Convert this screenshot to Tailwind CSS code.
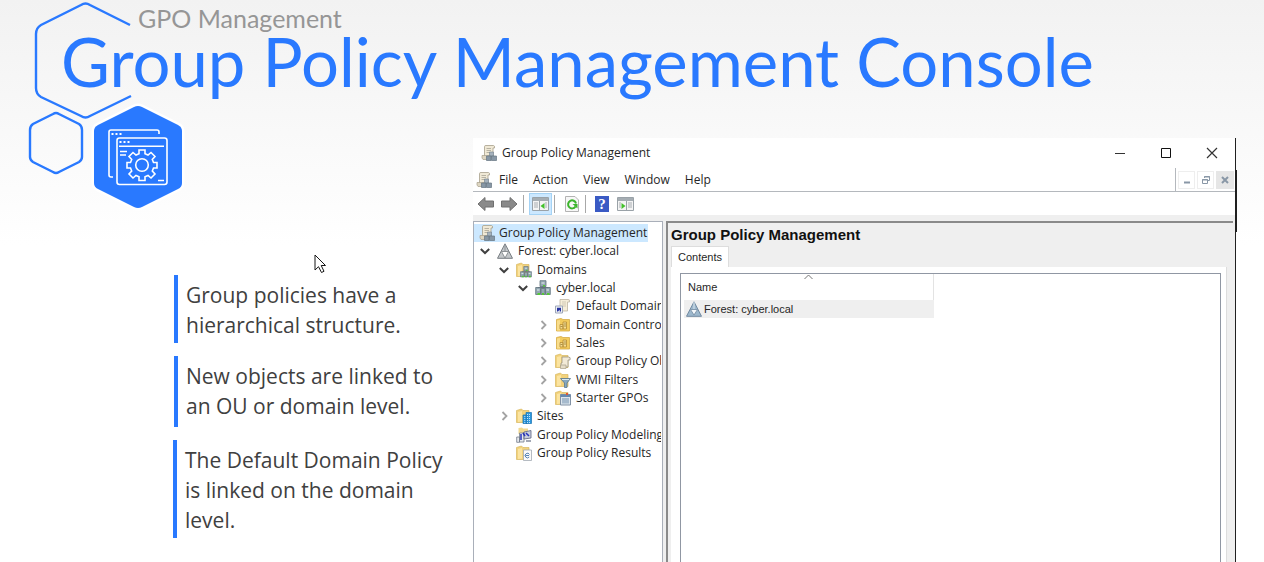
<!DOCTYPE html>
<html lang="en">
<head>
<meta charset="utf-8">
<meta name="viewport" content="width=device-width, initial-scale=1">
<title>Group Policy Management Console</title>
<script src="https://cdn.jsdelivr.net/npm/@tailwindcss/browser@4"></script>
</head>
<body class="relative flex h-screen flex-col overflow-hidden bg-white bg-linear-to-b from-[#f2f2f2] to-white to-[245px] font-['Lato',sans-serif]">

<svg width="0" height="0" class="absolute" aria-hidden="true">
  <defs>
    <symbol id="scroll" viewBox="0 0 16 16">
      <path d="M3.500 1.500Q3.500 .5 5 .5H12.500Q14 .7 13.500 3H12V12H3.500Z" fill="#f0e9d6" stroke="#a79f8b" stroke-width=".8"/>
      <path d="M5.500 3.500H10M5.500 5.500H10M5.500 7.500H9" stroke="#aaa595" stroke-width=".8"/>
      <path d="M1 10.500H8V14.500H2Q.5 13.500 1 10.500Z" fill="#ded6c2" stroke="#a79f8b" stroke-width=".7"/>
      <path d="M8.500 7H12.500V11H8.500Z" fill="#a6b2bd" stroke="#71808d" stroke-width=".6"/>
      <path d="M5.500 11H10V15.500H5.500ZM10.500 11H15.500V15.500H10.500Z" fill="#8797a5" stroke="#657582" stroke-width=".7"/>
    </symbol>
    <symbol id="forest" viewBox="0 0 16 16">
      <path d="M8 .8 15.500 15.300H.5Z" fill="#c3c7ca" stroke="#777d82"/>
      <path d="M4.500 8.500H11.500L8 15Z" fill="#fff" stroke="#777d82" stroke-width=".8"/>
      <path d="M8 1V8" stroke="#8b9196"/>
    </symbol>
    <symbol id="forest-blue" viewBox="0 0 16 16">
      <path d="M8 .8 15.500 15.300H.5Z" fill="#9db8cd" stroke="#7189a0"/>
      <path d="M4.500 8.500H11.500L8 14Z" fill="#f4f8fb" stroke="#7189a0" stroke-width=".8"/>
      <path d="M8 1V8" stroke="#d9e5ed"/>
    </symbol>
    <symbol id="folder" viewBox="0 0 16 16">
      <path d="M.5 2.500 5.500 1 7 2.500H13V14.500H.5Z" fill="#f2d27c" stroke="#d9b75e" stroke-width=".7"/>
      <path d="M2 4 6 3V13.500L2 14Z" fill="#fbe4a1"/>
    </symbol>
    <symbol id="servers" viewBox="0 0 16 16">
      <path d="M8 5V9M3 9V7.500H13V9" fill="none" stroke="#62717b"/>
      <path d="M5 .7H11V6.500H5ZM.7 7.500H5.500V14.500H.7ZM10.500 7.500H15.300V14.500H10.500ZM6 8.500H10V14.500H6Z" fill="#94a8b2" stroke="#5f717c" stroke-width=".8"/>
      <path d="M6.500 3H9.500M2 10H4.500M11.500 10H14" stroke="#e6eef1"/>
      <path d="M8 5H10V6.500H8ZM2.500 13H5V15H2.500ZM12 13H14.500V15H12ZM7 13H9V15H7Z" fill="#55c935"/>
    </symbol>
    <symbol id="domains" viewBox="0 0 16 16">
      <use href="#folder"/><use href="#servers" x="4" y="4" width="12" height="12"/>
    </symbol>
    <symbol id="link" viewBox="0 0 16 16">
      <path d="M5 1.500H13Q15 1 14.500 4H12.500V13H5Z" fill="#f5edd9" stroke="#b5ac98" stroke-width=".7"/>
      <path d="M7 4H11M7 6H11M7 8H11" stroke="#c1baa8" stroke-width=".7"/>
      <path d="M.5 8H7.500V15H.5Z" fill="#eef0f5" stroke="#9ea7b7"/>
      <path d="M2 13.500V9.700H6V13.500H4.700V11.800L3 13.500Z" fill="#2734a0"/>
    </symbol>
    <symbol id="ou" viewBox="0 0 16 16">
      <path d="M1.500 2.500 6 1.500 8 2.500H14.500V14H1.500Z" fill="#f3cb5c" stroke="#d6ab45" stroke-width=".8"/>
      <path d="M2 3.500 5 3V13.500H2Z" fill="#f9dd8b"/>
      <path d="M5 7.500H8V12H5ZM8 5H11.500V12H8Z" fill="#f6dd92" stroke="#b58d35" stroke-width=".8"/>
      <path d="M5.500 9.500H7.500M9 7H11M9 9H11" stroke="#9b8038" stroke-width=".8"/>
    </symbol>
    <symbol id="policies" viewBox="0 0 16 16">
      <use href="#folder"/>
      <path d="M7 4H13.500Q16 4 15 7H13V14H6V10H7Z" fill="#f2ead7" stroke="#9b9485" stroke-width=".8"/>
      <path d="M5.500 12H11V15.500H5.500Z" fill="#e5dcc7" stroke="#a79f8b" stroke-width=".7"/>
    </symbol>
    <symbol id="wmi" viewBox="0 0 16 16">
      <use href="#folder"/>
      <path d="M5.500 6.500H15.500L12 11V15.500H9.500V11Z" fill="#86a7bf" stroke="#587891" stroke-width=".8"/>
      <path d="M7 7.500H14" stroke="#dbe8f0"/>
    </symbol>
    <symbol id="starter" viewBox="0 0 16 16">
      <use href="#folder"/>
      <path d="M5.500 4.500H15.500V15H5.500Z" fill="#dce5ed" stroke="#8292a5"/>
      <path d="M5.500 4.500H15.500V7H5.500Z" fill="#6688ae"/>
      <path d="M7 8H14V13.500H7Z" fill="#a6bacd"/><path d="M11 3H13V5H11Z" fill="#df5636"/>
    </symbol>
    <symbol id="sites" viewBox="0 0 16 16">
      <use href="#folder"/>
      <path d="M7 7H11V15.500H7ZM10 4.500H15.500V15.500H10Z" fill="#2c97dc" stroke="#1973b3" stroke-width=".7"/>
      <path d="M11.500 6V15M13.500 6V15M8.800 8V15" stroke="#bfe5ff" stroke-dasharray="1 1"/>
    </symbol>
    <symbol id="modeling" viewBox="0 0 16 16">
      <path d="M2.500 1 6 .5 7 1.500H12V7H2.500Z" fill="#f1d88f"/>
      <path d="M3.500 6H8V15H3.500ZM.7 10H3.500V15.300H.7Z" fill="#e6e9ee" stroke="#747c8c" stroke-width=".8"/>
      <path d="M8 5 15 3.500V11L8 12Z" fill="#c8cede" stroke="#59617f" stroke-width=".8"/>
      <path d="M5 7V13M7 6 9 9M10 6 13 9" stroke="#2934ba" stroke-width="1.500"/>
      <path d="M10 13H15V15H10Z" fill="#a3a8b5"/>
    </symbol>
    <symbol id="results" viewBox="0 0 16 16">
      <use href="#folder"/>
      <path d="M7.500 5H15.500V15.500H7.500Z" fill="#fafafa" stroke="#a2a9b2" stroke-width=".8"/>
      <path d="M13.500 9.500A2.300 2.300 0 1 0 13.200 12" fill="none" stroke="#5482b5"/><path d="M9.500 10.500H13" stroke="#5482b5"/>
    </symbol>
    <symbol id="open" viewBox="0 0 12 12"><path d="M1.800 4 6 8 10.200 4" fill="none" stroke="#404040" stroke-width="2"/></symbol>
    <symbol id="closed" viewBox="0 0 12 12"><path d="M4.500 2 8.500 6 4.500 10" fill="none" stroke="#a3a3a3" stroke-width="1.800"/></symbol>
    <symbol id="arrow" viewBox="0 0 18 16"><path d="M1 8 8 1.500V5H16.500V11H8V14.500Z" fill="#8a8a8a" stroke="#707070"/></symbol>
  </defs>
</svg>

<header class="h-[138px] shrink-0">
  <svg class="absolute left-0 top-0" width="200" height="215" viewBox="0 0 200 215" fill="none" aria-hidden="true">
    <path d="M130 25 90 5Q85.500 2 81 5L41 25Q36 28 36 34V88Q36 94 41 97L81 116Q85.500 119 90 116L131 96" stroke="#2979ff" stroke-width="2.400"/>
    <path d="M53 114Q56 112 59 114L79 124Q82 126 82 130V157Q82 160 79 162L59 172Q56 174 53 172L33 162Q30 160 30 157V130Q30 126 33 124Z" stroke="#2979ff" stroke-width="2.400"/>
    <path d="M134 107Q138 105 142 107L178 125Q182 127 182 131V183Q182 187 178 189L142 207Q138 209 134 207L98 189Q94 187 94 183V131Q94 127 98 125Z" fill="#2979ff" stroke="#fff" stroke-width="5" paint-order="stroke"/>
    <g stroke="#fff" stroke-width="1.600">
      <path d="M159 134V132Q159 130 157 130H111Q109 130 109 132V175Q109 177 111 177H113"/>
      <rect x="117" y="138" width="50" height="46.500" rx="2.500"/>
      <path d="M119 146.300H164M120 151.500H127M120 155H126M158 180.500H164"/>
      <path d="M111.500 134H122M119.500 142H130" stroke-width="2" stroke-dasharray="2 2"/>
      <circle cx="142" cy="165" r="6.300"/>
      <path d="M139 150H145V153.700L148 155 151 152.500 155 156.500 152.300 159.500 153.500 162.500H157V168H153.500L152.300 171 155 174 151 178 148 175.500 145 176.700V180.500H139V176.700L136 175.500 133 178 129 174 131.700 171 130.500 168H127V162.500H130.500L131.700 159.500 129 156.500 133 152.500 136 155 139 153.700Z"/>
    </g>
  </svg>
  <div class="relative pl-[138px] pt-1 text-[25px] leading-[28px] whitespace-nowrap text-[#969696]">GPO Management</div>
  <h1 class="relative pl-[61px] text-[67px] leading-[58px] whitespace-nowrap text-[#2979ff]">Group Policy Management Console</h1>
</header>

<main class="flex min-h-0 flex-1">
  <section class="w-[473px] shrink-0 pt-[137px] pl-[173px] font-['Open_Sans',sans-serif] text-[21px] leading-[30px] text-[#404040]">
    <ul class="flex flex-col gap-[13px] whitespace-nowrap">
      <li class="ml-px h-[68px] border-l-4 border-[#2979ff] pt-[5px] pl-2">Group policies have a<br>hierarchical structure.</li>
      <li class="ml-px h-[71px] border-l-4 border-[#2979ff] pt-[5px] pl-2">New objects are linked to<br>an OU or domain level.</li>
      <li class="h-[98px] border-l-4 border-[#2979ff] pt-[5px] pl-2">The Default Domain Policy<br>is linked on the domain<br>level.</li>
    </ul>
  </section>

  <section class="relative mr-7 flex min-w-0 flex-1 flex-col border-r border-[#202020] bg-white font-['Open_Sans',sans-serif] text-[12px] text-[#262626]">
    <div class="absolute top-8 -right-0.5 h-[62px] w-px bg-[#202020]"></div>

    <div class="flex h-[30px] shrink-0 items-center pl-2">
      <svg class="mr-[5px] size-4"><use href="#scroll"/></svg>
      <span class="flex-1">Group Policy Management</span>
      <button aria-label="Minimize" class="flex h-full w-[46px] items-center justify-center"><svg width="12" height="12"><path d="M1 6.500H11" stroke="#333"/></svg></button>
      <button aria-label="Maximize" class="flex h-full w-[46px] items-center justify-center"><svg width="12" height="12"><path d="M1.500 1.500H10.500V10.500H1.500Z" fill="none" stroke="#111"/></svg></button>
      <button aria-label="Close" class="flex h-full w-[46px] items-center justify-center"><svg width="12" height="12"><path d="M1 1 11 11M11 1 1 11" stroke="#333" stroke-width="1.200"/></svg></button>
    </div>

    <nav class="flex h-6 shrink-0 items-center gap-[15px] border-b border-[#b4b8bd] pl-[3px]">
      <svg class="-mr-2 size-4"><use href="#scroll"/></svg>
      <button>File</button><button>Action</button><button>View</button><button>Window</button><button>Help</button>
      <div class="ml-auto flex h-full items-center gap-0.5 border-l border-[#b4b8bd] pr-px pl-0.5">
        <button aria-label="Minimize pane" class="flex h-[18px] w-[17px] items-center justify-center border border-[#eee]"><svg width="10" height="10"><path d="M2 7.500H8" stroke="#8997a6" stroke-width="2"/></svg></button>
        <button aria-label="Restore pane" class="flex h-[18px] w-[17px] items-center justify-center border border-[#eee]"><svg width="10" height="10" fill="none" stroke="#8997a6"><path d="M3.500 3V1.500H8.500V5.500H7M3 2H9M1.500 4.500H6.500V8.500H1.500ZM1 5H7"/></svg></button>
        <button aria-label="Close pane" class="flex h-[18px] w-[18px] items-center justify-center bg-[#e6e6e6]"><svg width="10" height="10"><path d="M2 2 8 8M8 2 2 8" stroke="#8997a6" stroke-width="2"/></svg></button>
      </div>
    </nav>

    <div class="flex h-[23px] shrink-0 items-center pt-px pl-1">
      <button aria-label="Back"><svg width="18" height="16" class="block"><use href="#arrow"/></svg></button>
      <button aria-label="Forward" class="ml-[5px] -scale-x-100"><svg width="18" height="16" class="block"><use href="#arrow"/></svg></button>
      <span class="ml-[5px] h-[18px] w-px bg-[#a8a8a8]"></span>
      <button aria-label="Show console tree" class="ml-[5px] flex h-[22px] w-[23px] items-center justify-center border border-[#a5d3f5] bg-[#cce8ff]">
        <svg width="17" height="14"><path d="M.5.5H16.500V13.500H.5Z" fill="#f4f4f4" stroke="#9aa2a8"/><path d="M1 1H16V4H1Z" fill="#a5adb3"/><path d="M2 6H6M2 8H6M2 10H6M13 6H15M13 8H15M13 10H15" stroke="#a8adb2"/><path d="M7.500 4V13" stroke="#9aa2a8"/><path d="M12.500 6V12L8.500 9Z" fill="#43c12b"/></svg>
      </button>
      <span class="ml-0.5 h-[18px] w-px bg-[#a8a8a8]"></span>
      <button aria-label="Refresh" class="ml-[9px]"><svg width="16" height="18" class="block"><path d="M1.500 1.500H11L14.500 5V16.500H1.500Z" fill="#f7f7f7" stroke="#b3b3b3"/><path d="M11.500 11.500A4 4 0 1 1 12 8.500" fill="none" stroke="#3cb52c" stroke-width="2"/><path d="M8.500 9H13.500V13.500Z" fill="#3cb52c"/></svg></button>
      <span class="ml-[5px] h-[18px] w-px bg-[#a8a8a8]"></span>
      <button aria-label="Help" class="ml-[9px] flex h-4 w-[14px] items-center justify-center bg-[#3a5ac4] font-['Liberation_Serif',serif] text-[15px] leading-4 font-bold text-white">?</button>
      <button aria-label="Show action pane" class="ml-2"><svg width="17" height="14" class="block"><path d="M.5.5H16.500V13.500H.5Z" fill="#f4f4f4" stroke="#9aa2a8"/><path d="M1 1H16V4H1Z" fill="#a5adb3"/><path d="M2 6H4M2 8H4M2 10H4M11 6H15M11 8H15M11 10H15" stroke="#a8adb2"/><path d="M9.500 4V13" stroke="#9aa2a8"/><path d="M4.500 6V12L8.500 9Z" fill="#43c12b"/></svg></button>
    </div>

    <div class="flex min-h-0 flex-1 gap-[3px] bg-[#efefef] pt-[6px] pr-0.5">
      <div class="w-[190px] shrink-0 overflow-hidden border border-b-0 border-[#a9afb9] bg-white pt-0.5 pr-px">
        <ul class="grid h-[238px] auto-rows-fr overflow-hidden whitespace-nowrap">
          <li class="flex w-[174px] items-center gap-1 bg-[#cce8ff] pl-[5px]"><svg class="size-4 shrink-0"><use href="#scroll"/></svg>Group Policy Management</li>
          <li class="flex items-center pl-[5px]"><svg class="mr-1.5 size-3 shrink-0"><use href="#open"/></svg><svg class="mr-[5px] size-4 shrink-0"><use href="#forest"/></svg>Forest: cyber.local</li>
          <li class="flex items-center pl-6"><svg class="mr-1.5 size-3 shrink-0"><use href="#open"/></svg><svg class="mr-[5px] size-4 shrink-0"><use href="#domains"/></svg>Domains</li>
          <li class="flex items-center pl-[43px]"><svg class="mr-1.5 size-3 shrink-0"><use href="#open"/></svg><svg class="mr-[5px] size-4 shrink-0"><use href="#servers"/></svg>cyber.local</li>
          <li class="flex items-center pl-[81px]"><svg class="mr-[5px] size-4 shrink-0"><use href="#link"/></svg>Default Domain Policy</li>
          <li class="flex items-center pl-[63px]"><svg class="mr-1.5 size-3 shrink-0"><use href="#closed"/></svg><svg class="mr-[5px] size-4 shrink-0"><use href="#ou"/></svg>Domain Controllers</li>
          <li class="flex items-center pl-[63px]"><svg class="mr-1.5 size-3 shrink-0"><use href="#closed"/></svg><svg class="mr-[5px] size-4 shrink-0"><use href="#ou"/></svg>Sales</li>
          <li class="flex items-center pl-[63px]"><svg class="mr-1.5 size-3 shrink-0"><use href="#closed"/></svg><svg class="mr-[5px] size-4 shrink-0"><use href="#policies"/></svg>Group Policy Objects</li>
          <li class="flex items-center pl-[63px]"><svg class="mr-1.5 size-3 shrink-0"><use href="#closed"/></svg><svg class="mr-[5px] size-4 shrink-0"><use href="#wmi"/></svg>WMI Filters</li>
          <li class="flex items-center pl-[63px]"><svg class="mr-1.5 size-3 shrink-0"><use href="#closed"/></svg><svg class="mr-[5px] size-4 shrink-0"><use href="#starter"/></svg>Starter GPOs</li>
          <li class="flex items-center pl-6"><svg class="mr-1.5 size-3 shrink-0"><use href="#closed"/></svg><svg class="mr-[5px] size-4 shrink-0"><use href="#sites"/></svg>Sites</li>
          <li class="flex items-center pl-[42px]"><svg class="mr-[5px] size-4 shrink-0"><use href="#modeling"/></svg>Group Policy Modeling</li>
          <li class="flex items-center pl-[42px]"><svg class="mr-[5px] size-4 shrink-0"><use href="#results"/></svg>Group Policy Results</li>
        </ul>
      </div>

      <div class="flex min-w-0 flex-1 flex-col border-t-2 border-l-2 border-[#8a8a8a] pr-1.5 pl-[3px] font-['Liberation_Sans',sans-serif]">
        <h2 class="h-[23px] text-[15px] leading-[24px] font-bold text-[#111]">Group Policy Management</h2>
        <div class="flex"><button class="h-[21px] w-[58px] border border-b-0 border-[#ddd] bg-white text-[11px]">Contents</button></div>
        <div class="flex min-h-0 flex-1 border-r border-[#ddd] bg-white pt-1.5 pr-[5px] pl-[9px]">
          <div class="min-w-0 flex-1 border border-b-0 border-[#9097a3] px-[3px]">
            <table class="w-[250px] table-fixed border-collapse text-[11px]">
              <thead><tr><th class="relative h-[26px] border-r border-[#e3e3e3] pl-1 text-left align-middle font-normal">Name<svg class="absolute top-0 left-[120px]" width="9" height="6"><path d="M.5 5 4.500 1 8.500 5" fill="none" stroke="#777"/></svg></th></tr></thead>
              <tbody><tr><td class="h-[18px] bg-[#efefef] p-0"><div class="flex items-center gap-0.5 pl-0.5"><svg class="size-4"><use href="#forest-blue"/></svg>Forest: cyber.local</div></td></tr></tbody>
            </table>
          </div>
        </div>
      </div>
    </div>
  </section>
</main>

<svg class="absolute top-[254px] left-[314px]" width="13" height="20" aria-hidden="true"><path d="M1 1V16L4.500 12.700 7.500 18.500 10 17.300 7.200 11.500H11.500Z" fill="#fff" stroke="#161616"/></svg>
</body>
</html>
